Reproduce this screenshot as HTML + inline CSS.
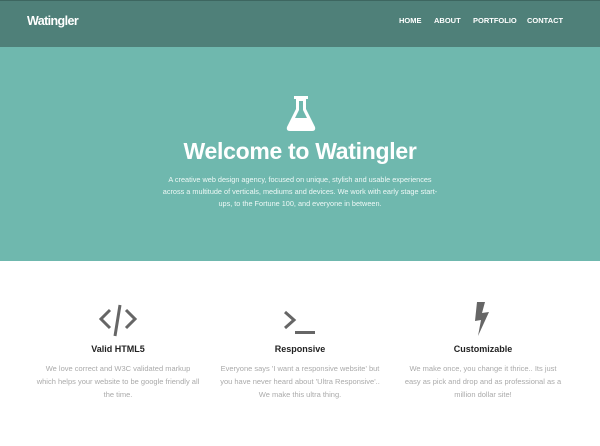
<!DOCTYPE html>
<html><head><meta charset="utf-8"><style>
*{margin:0;padding:0;box-sizing:border-box}
body{width:600px;height:446px;overflow:hidden;background:#fff;font-family:"Liberation Sans",sans-serif}
.nav{position:absolute;left:0;top:0;width:600px;height:47px;background:#4f8079;border-top:1px solid #3d6660}
.logo{position:absolute;left:27px;top:13px;color:#fff;font-weight:bold;font-size:12.5px;letter-spacing:-0.6px}
.nav ul{position:absolute;top:15px;left:0;list-style:none}
.nav li{position:absolute;color:#fff;font-weight:bold;font-size:7.5px;white-space:nowrap}
.hero{position:absolute;left:0;top:47px;width:600px;height:214px;background:#6fb8ae;text-align:center;color:#fff}
.hero h1{position:absolute;top:91px;width:600px;font-size:23px;font-weight:bold;letter-spacing:-0.3px}
.hero p{position:absolute;top:127px;left:162px;width:276px;font-size:7.3px;line-height:12px;color:#eef8f6}
.col{position:absolute;top:296px;width:180px;text-align:center}
.col h3{position:absolute;top:48px;width:180px;font-size:9px;font-weight:bold;color:#222}
.col p{position:absolute;top:66px;left:8px;width:164px;font-size:7.5px;line-height:13px;color:#aaa}
.col svg{position:absolute;left:70px;top:6px}
</style></head><body>
<div class="nav"><div class="logo">Watingler</div>
<ul><li style="left:399px">HOME</li><li style="left:434px">ABOUT</li><li style="left:473px">PORTFOLIO</li><li style="left:527px">CONTACT</li></ul></div>
<div class="hero">
<svg style="position:absolute;left:285px;top:49px" width="32" height="36" viewBox="0 0 32 36"><rect x="9" y="0" width="14" height="3" fill="#fff"/><path d="M11 3h10v10l9 18q1 4-3 4H5q-4 0-3-4l9-18z" fill="#fff"/><path d="M14 5v9l-4 8h12l-4-8V5z" fill="#6fb8ae"/></svg>
<h1>Welcome to Watingler</h1>
<p>A creative web design agency, focused on unique, stylish and usable experiences across a multitude of verticals, mediums and devices. We work with early stage start-ups, to the Fortune 100, and everyone in between.</p>
</div>
<div class="col" style="left:28px"><svg width="40" height="36" viewBox="0 0 40 36"><path d="M12 8L3 17l9 9M28 8l9 9-9 9M22 3l-5 31" stroke="#666" stroke-width="3" fill="none"/></svg><h3>Valid HTML5</h3><p>We love correct and W3C validated markup which helps your website to be google friendly all the time.</p></div>
<div class="col" style="left:210px"><svg width="40" height="36" viewBox="0 0 40 36"><path d="M5 10l9 8-9 8" stroke="#666" stroke-width="3" fill="none"/><rect x="15" y="29" width="20" height="3" fill="#666"/></svg><h3>Responsive</h3><p>Everyone says 'I want a responsive website' but you have never heard about 'Ultra Responsive'.. We make this ultra thing.</p></div>
<div class="col" style="left:393px"><svg width="40" height="36" viewBox="0 0 40 36"><path d="M14 0h8l-3 11 7-1-11 24 3-16-6 1z" fill="#666"/></svg><h3>Customizable</h3><p>We make once, you change it thrice.. Its just easy as pick and drop and as professional as a million dollar site!</p></div>
</body></html>
